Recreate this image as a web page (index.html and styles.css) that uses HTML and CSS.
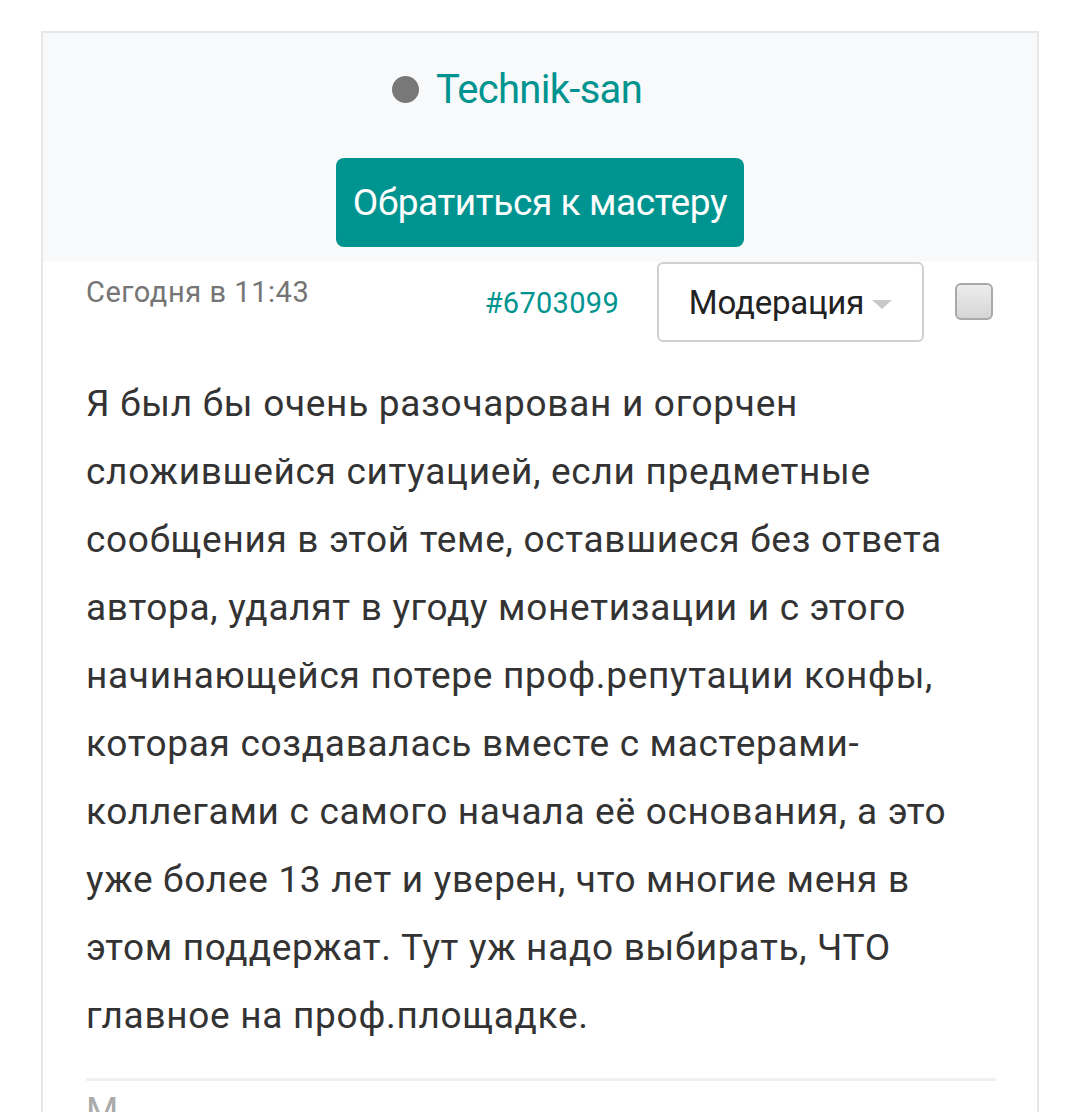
FILE: index.html
```html
<!DOCTYPE html>
<html lang="ru">
<head>
<meta charset="utf-8">
<link rel="stylesheet" href="styles.css">
</head>
<body>
<div class="card">
  <div class="head">
    <div class="name-row">
      <span class="dot"></span>
      <a class="name">Technik-san</a>
    </div>
    <a class="btn">Обратиться к мастеру</a>
  </div>
  <div class="post">
    <div class="meta">
      <span class="date">Сегодня в 11:43</span>
      <div class="tools">
        <a class="pid">#6703099</a>
        <div class="select">Модерация<span class="caret"></span></div>
        <span class="check"></span>
      </div>
    </div>
    <p class="text">Я был бы очень разочарован и огорчен сложившейся ситуацией, если предметные сообщения в этой теме, оставшиеся без ответа автора, удалят в угоду монетизации и с этого начинающейся потере проф.репутации конфы, которая создавалась вместе с мастерами-коллегами с самого начала её основания, а это уже более 13 лет и уверен, что многие меня в этом поддержат. Тут уж надо выбирать, ЧТО главное на проф.площадке.</p>
    <div class="sep"></div>
    <div class="next">М</div>
  </div>
</div>
</body>
</html>
```
FILE: styles.css
```css
html, body {
  margin: 0;
  padding: 0;
  background: #fff;
  font-family: Roboto, "Noto Sans", sans-serif;
}
.card {
  margin: 31px 0 0 41px;
  width: 998px;
  border: 2px solid #e6e6e6;
  border-bottom: none;
  height: 1100px;
  box-sizing: border-box;
}
.head {
  background: #f8f9fa;
  padding: 33px 0 15px;
  display: flex;
  flex-direction: column;
  align-items: center;
}
.name-row {
  display: flex;
  align-items: center;
  gap: 17px;
  margin-right: 46px;
  height: 46px;
}
.dot {
  width: 27px;
  height: 27px;
  border-radius: 50%;
  background: #787878;
}
.name {
  color: #009490;
  font-size: 40px;
  letter-spacing: -0.7px;
}
.btn {
  margin-top: 46px;
  background: #009490;
  color: #fff;
  font-size: 37px;
  letter-spacing: -0.4px;
  border-radius: 8px;
  width: 408px;
  height: 89px;
  display: flex;
  align-items: center;
  justify-content: center;
}
.post {
  padding: 0 41px 0 43px;
}
.meta {
  display: flex;
  justify-content: space-between;
  align-items: flex-start;
}
.date {
  color: #757575;
  font-size: 29px;
  letter-spacing: 0.55px;
  margin-top: 13px;
}
.tools {
  display: flex;
  align-items: center;
}
.pid {
  color: #009490;
  font-size: 29px;
  letter-spacing: 0.3px;
  margin-right: 38px;
  margin-top: 2px;
}
.select {
  width: 267px;
  height: 80px;
  box-sizing: border-box;
  border: 2px solid #d0d0d0;
  border-radius: 6px;
  display: flex;
  align-items: center;
  justify-content: center;
  font-size: 33px;
  letter-spacing: -0.2px;
  color: #222;
}
.caret {
  width: 0;
  height: 0;
  border-left: 10px solid transparent;
  border-right: 10px solid transparent;
  border-top: 9px solid #c8c8c8;
  margin-left: 8px;
  margin-top: 4px;
}
.check {
  margin-left: 31px;
  margin-right: 3px;
  width: 38px;
  height: 37px;
  box-sizing: border-box;
  border: 2px solid #a9a9a9;
  border-radius: 6px;
  background: linear-gradient(#ececec, #d6d6d6);
  margin-top: -2px;
}
.text {
  margin: 28px 0 0;
  font-size: 37px;
  letter-spacing: 0.7px;
  line-height: 68px;
  color: #333;
}
.sep {
  margin-top: 28px;
  height: 3px;
  background: #f0f0f0;
}
.next {
  margin-top: 8px;
  font-size: 37px;
  color: #aaa;
}
```
